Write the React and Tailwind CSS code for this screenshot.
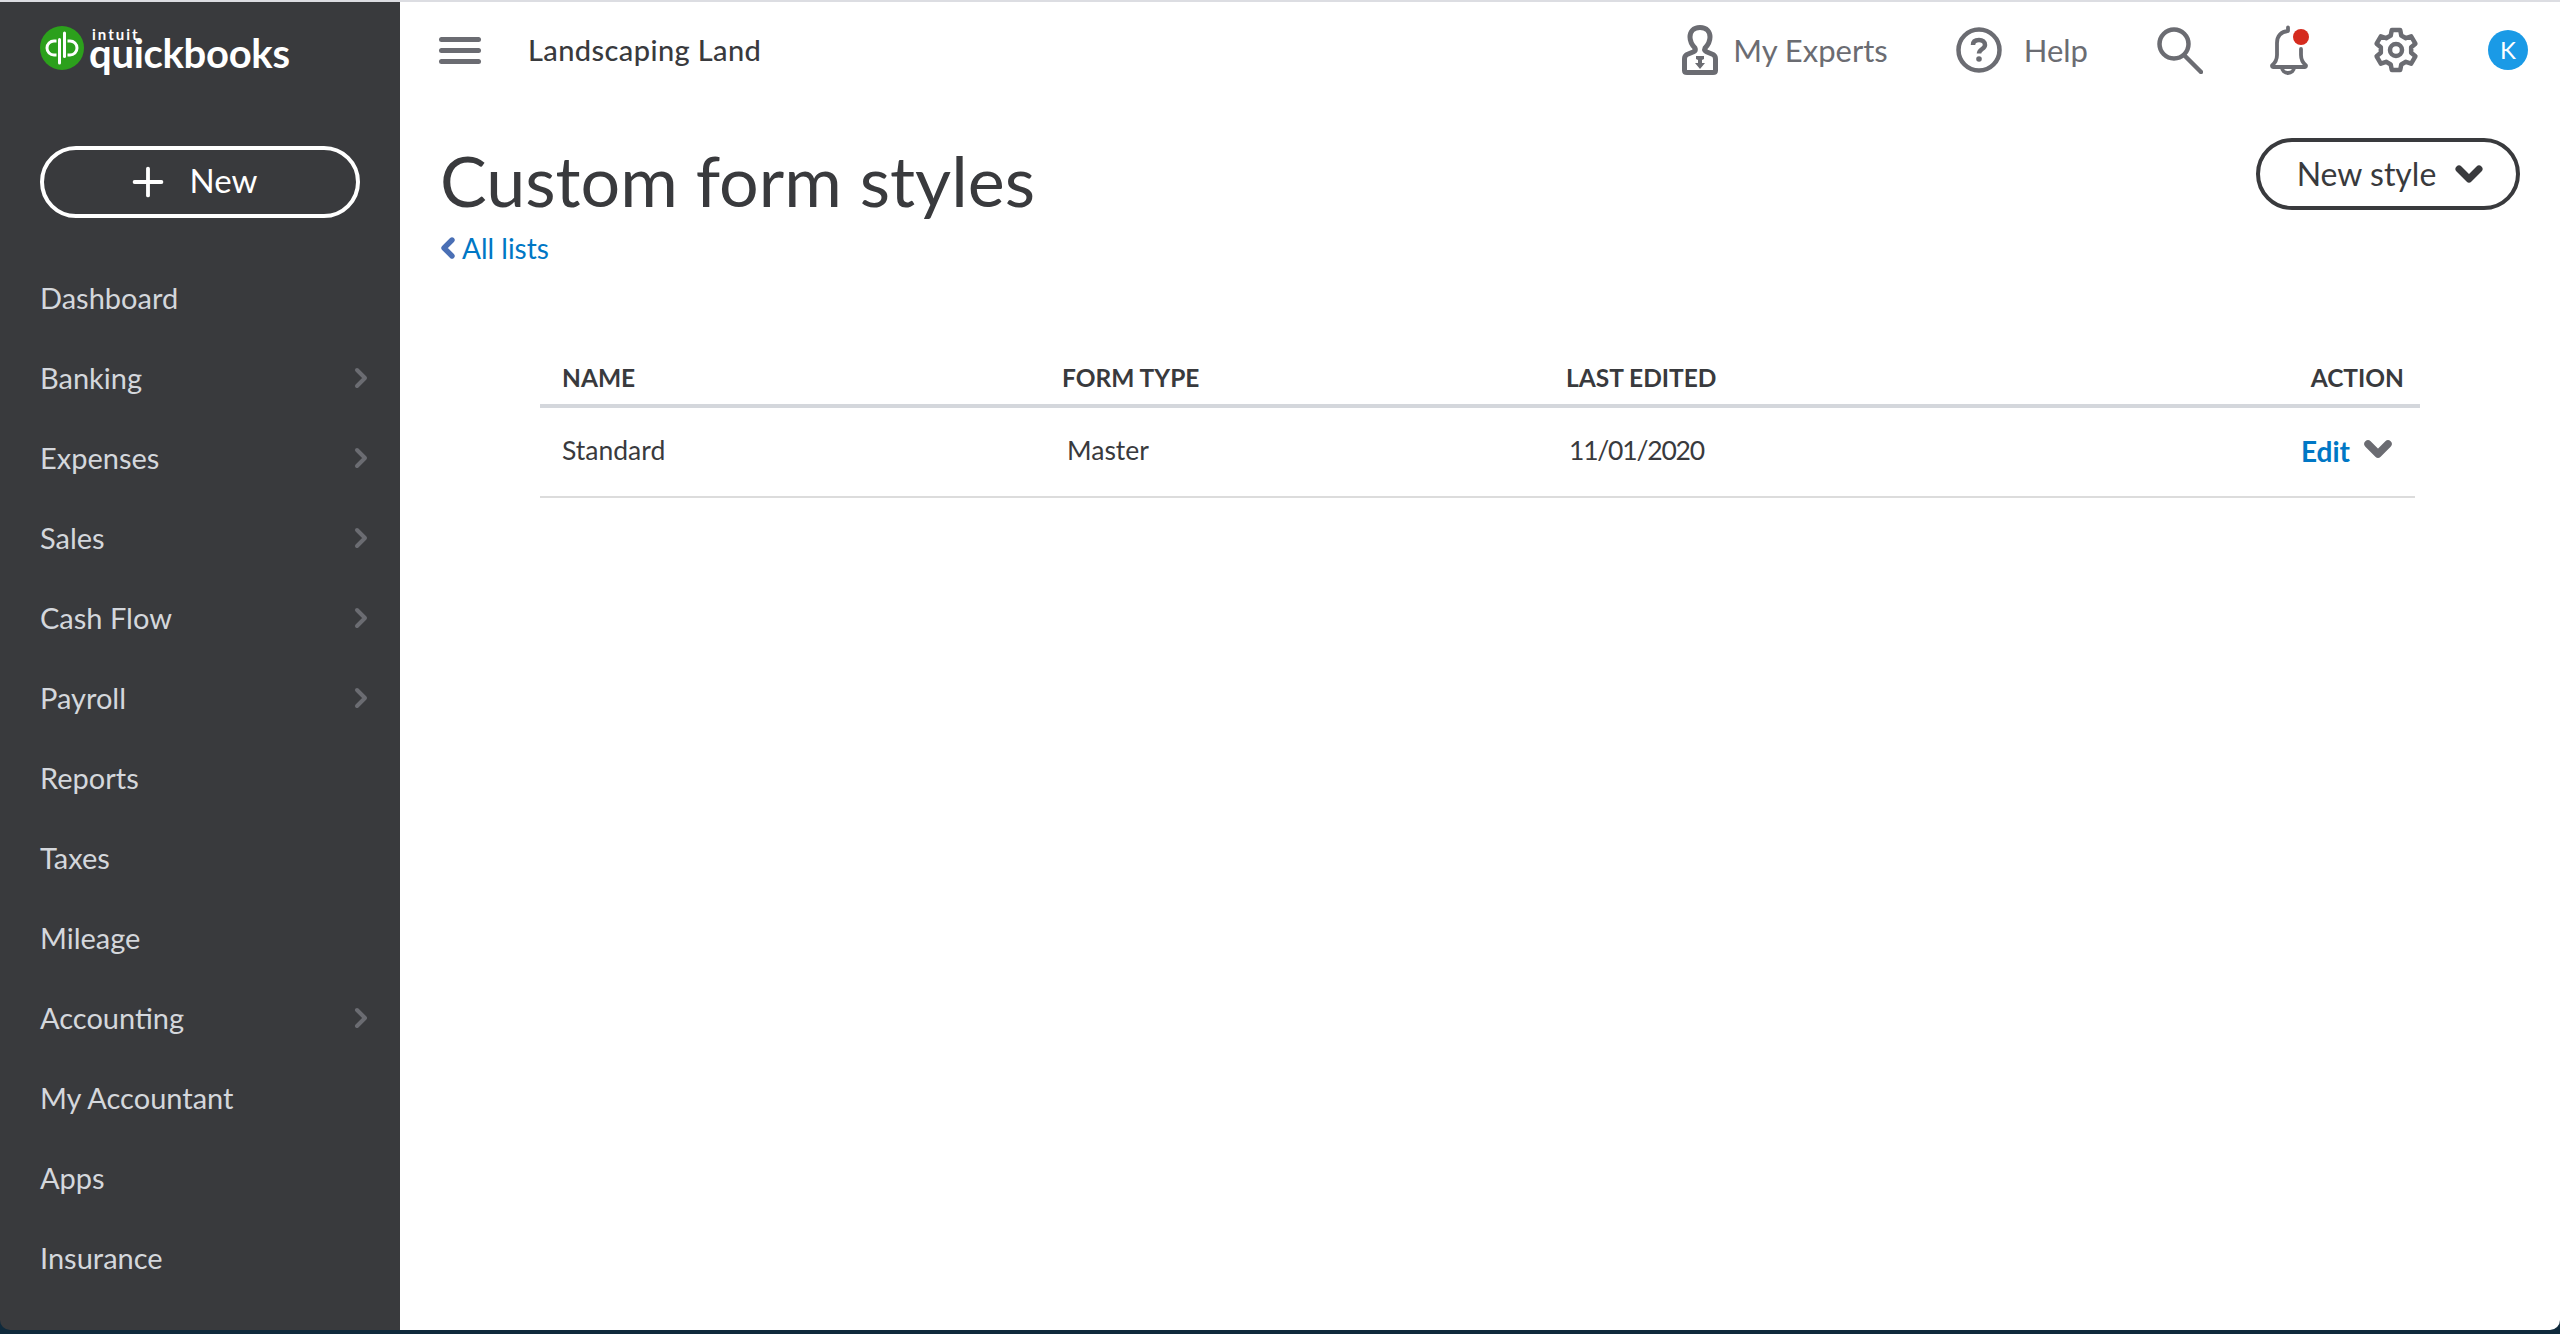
import React from "react";
import { Plus, ChevronRight, ChevronLeft, ChevronDown } from "lucide-react";

const nav = [
  ["Dashboard", false], ["Banking", true], ["Expenses", true], ["Sales", true], ["Cash Flow", true],
  ["Payroll", true], ["Reports", false], ["Taxes", false], ["Mileage", false], ["Accounting", true],
  ["My Accountant", false], ["Apps", false], ["Insurance", false],
];

function QbMark() {
  return (
    <svg viewBox="0 0 44 44" className="w-[44px] h-[44px] shrink-0">
      <circle cx="22" cy="22" r="22" fill="#2ca01c" />
      <path d="M16.500 15H14a7 7 0 0 0 0 14h2.500" fill="none" stroke="#fff" strokeWidth="3" />
      <path d="M19.500 13.500V37" fill="none" stroke="#fff" strokeWidth="3" strokeLinecap="round" />
      <path d="M27.500 29H30a7 7 0 0 0 0-14h-2.500" fill="none" stroke="#fff" strokeWidth="3" />
      <path d="M24.500 7v23.500" fill="none" stroke="#fff" strokeWidth="3" strokeLinecap="round" />
    </svg>
  );
}

function ExpertIcon() {
  return (
    <svg viewBox="0 0 36 50" className="w-[36px] h-[50px]" fill="none" stroke="#6b6c72" strokeWidth="5" strokeLinejoin="round">
      <path d="M18 2.500C11 2.500 8 7 8 12c0 5 2 8 5 11 1 2 0 3-2 4l-6 2.500c-2 1-2.500 2.500-2.500 4.500v11.500c0 1.500 1 2 2.500 2h26c1.500 0 2.500-.5 2.500-2V34c0-2-.5-3.500-2.500-4.500L25 27c-2-1-3-2-2-4 3-3 5-6 5-11 0-5-3-9.500-10-9.500z" />
      <path d="M14 31h8v3l-2 1v3h3l-5 6-5-6h3v-3l-2-1z" fill="#6b6c72" stroke="none" />
    </svg>
  );
}

function HelpIcon() {
  return (
    <svg viewBox="0 0 46 46" className="w-[46px] h-[46px]" fill="none" stroke="#6b6c72">
      <circle cx="23" cy="23" r="20.500" strokeWidth="4.500" />
      <path d="M17 18c0-3.500 2.500-5 6-5s6 1.800 6 5c0 4-6 4-6 8.500" strokeWidth="4.500" />
      <circle cx="23" cy="32" r="2.800" fill="#6b6c72" stroke="none" />
    </svg>
  );
}

function SearchIcon() {
  return (
    <svg viewBox="0 0 46 47" className="w-[46px] h-[47px]" fill="none" stroke="#6b6c72" strokeWidth="4.500" strokeLinecap="round">
      <circle cx="17" cy="17" r="14.500" />
      <path d="M27.500 28.500L44 45" />
    </svg>
  );
}

function BellIcon() {
  return (
    <span className="relative block w-[38px] h-[50px]">
      <svg viewBox="0 0 38 50" className="w-[38px] h-[50px]" fill="none" stroke="#6b6c72" strokeWidth="3.800" strokeLinejoin="round" strokeLinecap="round">
        <path d="M18 2.500V6c-7 .5-11 5-11 12v12c0 5-2 8-5 10.500 0 1 .5 1.500 1.500 1.500h31c1 0 1.500-.5 1.500-1.500-3-2.500-5-5.500-5-10.500v-6" />
        <path d="M12 42.500a6 5.500 0 0 0 12 0" />
      </svg>
      <span className="absolute left-[23px] top-[4px] w-[16px] h-[16px] rounded-full bg-[#d52b1e]" />
    </span>
  );
}

function gearPath() {
  const c = 23, rOut = 20.4, rIn = 15.4;
  const pt = (r, deg) => {
    const a = (deg * Math.PI) / 180;
    return `${(c + r * Math.cos(a)).toFixed(2)} ${(c + r * Math.sin(a)).toFixed(2)}`;
  };
  let d = "";
  for (let i = 0; i < 6; i++) {
    const t = -90 + i * 60;
    d += `${i === 0 ? "M" : "L"}${pt(rIn, t - 20)} L${pt(rOut, t - 12)} L${pt(rOut, t + 12)} L${pt(rIn, t + 20)} `;
  }
  return d + "Z";
}

function GearIcon() {
  return (
    <svg viewBox="0 0 46 46" className="w-[46px] h-[46px]" fill="none" stroke="#6b6c72" strokeWidth="4.500" strokeLinejoin="round">
      <path d={gearPath()} />
      <circle cx="23" cy="23" r="6" />
    </svg>
  );
}

const lato = "font-['Lato','Liberation_Sans',sans-serif]";

export default function App() {
  return (
    <div className={`h-screen w-full overflow-hidden flex flex-col bg-[#0f2a3c] ${lato}`}>
      <div className="h-[2px] shrink-0 bg-[#dcdde2]" />
      <div className="h-[1328px] shrink-0 flex">
        <aside className="w-[400px] shrink-0 bg-[#393a3d] rounded-bl-[10px] flex flex-col pl-[40px]">
          <div className="h-[104px] flex items-start pt-[24px] gap-[5px]">
            <QbMark />
            <div className="flex flex-col text-white leading-none">
              <span className="text-[15px] font-bold tracking-[2px] ml-[3px] leading-[10px] mt-[3px]">intuit</span>
              <span className="text-[40px] font-bold leading-[32px] tracking-[-0.3px] -mt-[2px]">quickbooks</span>
            </div>
          </div>
          <button className="w-[320px] h-[72px] mt-[40px] rounded-full border-[4px] border-white text-white flex items-center justify-center gap-[19px] text-[33px] pr-[18px]">
            <Plus size={46} strokeWidth={2} />
            <span className="pb-[2px]">New</span>
          </button>
          <nav className="flex flex-col mt-[40px]">
            {nav.map(([label, arrow]) => (
              <div key={label} className="h-[80px] flex items-center justify-between pr-[23px] text-[29px] text-[#d4d7dc]">
                <span>{label}</span>
                {arrow && <ChevronRight size={32} strokeWidth={3} className="text-[#6b6c72]" />}
              </div>
            ))}
          </nav>
        </aside>
        <main className="flex-1 bg-white rounded-br-[10px]">
          <header className="h-[96px] flex items-center pl-[39px]">
            <div className="flex flex-col gap-[6px] w-[42px]">
              <span className="h-[5px] rounded bg-[#6b6c72]" />
              <span className="h-[5px] rounded bg-[#6b6c72]" />
              <span className="h-[5px] rounded bg-[#6b6c72]" />
            </div>
            <span className="ml-[47px] text-[29px] tracking-[0.4px] font-medium text-[#393a3d]">Landscaping Land</span>
            <div className="ml-auto flex items-center text-[#6b6c72] text-[31px] pr-[32px]">
              <ExpertIcon />
              <span className="ml-[15px]">My Experts</span>
              <span className="ml-[68px]"><HelpIcon /></span>
              <span className="ml-[22px]">Help</span>
              <span className="ml-[69px]"><SearchIcon /></span>
              <span className="ml-[67px]"><BellIcon /></span>
              <span className="ml-[65px]"><GearIcon /></span>
              <span className="ml-[69px] w-[40px] h-[40px] rounded-full bg-[#1a9ae6] text-white flex items-center justify-center text-[24px]">K</span>
            </div>
          </header>
          <div className="flex items-start justify-between pl-[40px] pr-[40px] mt-[40px]">
            <div>
              <h1 className="text-[70px] text-[#393a3d] leading-[96px] -mt-[6px]">Custom form styles</h1>
              <a className="flex items-center text-[28px] text-[#0077c5] leading-[36px] mt-[2px]">
                <ChevronLeft size={32} strokeWidth={4} className="text-[#4a6fb5] -ml-[8px]" />
                <span className="-ml-[2px]">All lists</span>
              </a>
            </div>
            <button className="w-[264px] h-[72px] rounded-full border-[4px] border-[#393a3d] text-[#393a3d] flex items-center justify-center gap-[13px] pl-[10px] text-[32px]">
              <span>New style</span>
              <ChevronDown size={40} strokeWidth={4.200} />
            </button>
          </div>
          <div className="w-[1880px] ml-[140px] mt-[78px]">
            <div className="h-[64px] pt-[8px] grid grid-cols-[500px_504px_1fr_auto] items-center pl-[22px] pr-[16px] border-b-[4px] border-[#d4d7dc] text-[24.500px] font-bold text-[#393a3d]">
              <span>NAME</span>
              <span>FORM TYPE</span>
              <span>LAST EDITED</span>
              <span>ACTION</span>
            </div>
            <div className="h-[90px] w-[1875px] pb-[2px] grid grid-cols-[505px_502px_1fr_auto] items-center pl-[22px] pr-[17px] border-b-[2px] border-[#dcdcdc] text-[26.500px] text-[#393a3d]">
              <span>Standard</span>
              <span>Master</span>
              <span className="tracking-[-1.200px]">11/01/2020</span>
              <span className="flex items-center gap-[8px]">
                <span className="text-[#0077c5] font-bold text-[28px]">Edit</span>
                <ChevronDown size={40} strokeWidth={4.500} className="text-[#6b6c72] -mt-[5px]" />
              </span>
            </div>
          </div>
        </main>
      </div>
    </div>
  );
}
